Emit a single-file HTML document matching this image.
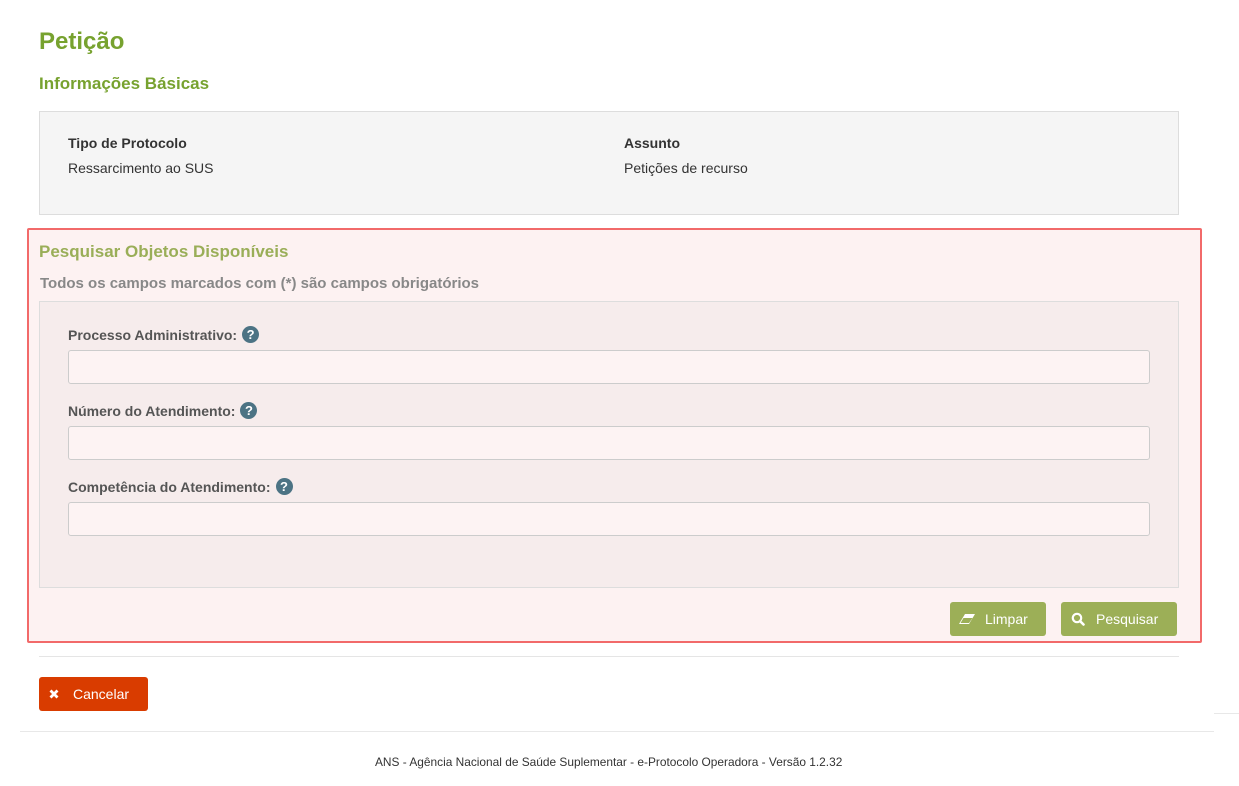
<!DOCTYPE html>
<html><head><meta charset="utf-8"><style>
*{box-sizing:border-box;margin:0;padding:0}
body{width:1239px;height:786px;background:#fff;font-family:"Liberation Sans",Arial,sans-serif;position:relative;overflow:hidden;color:#333}
.a{position:absolute}
h1{position:absolute;left:39px;top:28px;font-size:24px;color:#77a22f;font-weight:bold}
.h2{left:39px;top:74px;font-size:17px;font-weight:bold;color:#77a22f}
.info{left:39px;top:111px;width:1140px;height:104px;background:#f5f5f5;border:1px solid #ddd}
.lbl{font-size:14px;font-weight:bold;color:#333}
.val{font-size:14px;color:#333}
.box{left:27px;top:228px;width:1175px;height:415px;border:2px solid #f26a6a;background:#fdf2f2;border-radius:2px}
.inner{left:39px;top:301px;width:1140px;height:287px;background:#f6ecec;border:1px solid #ddd}
.fl{font-size:14px;font-weight:bold;color:#555}
.in{left:68px;width:1082px;height:34px;border:1px solid #ccc;background:#fdf3f3;border-radius:3px}
.q{display:inline-block;width:17px;height:17px;border-radius:50%;background:#4c7384;color:#fff;font-size:13px;font-weight:bold;text-align:center;line-height:17px;vertical-align:1px;margin-left:5px}
.btn{height:34px;border-radius:3px;color:#fff;font-size:14px;line-height:34px}
</style></head><body>
<h1>Petição</h1>
<div class="a h2">Informações Básicas</div>
<div class="a info"></div>
<div class="a lbl" style="left:68px;top:135px">Tipo de Protocolo</div>
<div class="a val" style="left:68px;top:160px">Ressarcimento ao SUS</div>
<div class="a lbl" style="left:624px;top:135px">Assunto</div>
<div class="a val" style="left:624px;top:160px">Petições de recurso</div>
<div class="a box"></div>
<div class="a" style="left:39px;top:242px;font-size:17px;font-weight:bold;color:#9aae58">Pesquisar Objetos Disponíveis</div>
<div class="a" style="left:40px;top:275px;font-size:15px;font-weight:bold;color:#888">Todos os campos marcados com (*) são campos obrigatórios</div>
<div class="a inner"></div>
<div class="a fl" style="left:68px;top:326px">Processo Administrativo:<span class="q">?</span></div>
<div class="a in" style="top:350px"></div>
<div class="a fl" style="left:68px;top:402px">Número do Atendimento:<span class="q">?</span></div>
<div class="a in" style="top:426px"></div>
<div class="a fl" style="left:68px;top:478px">Competência do Atendimento:<span class="q">?</span></div>
<div class="a in" style="top:502px"></div>
<div class="a btn" style="left:950px;top:602px;width:96px;background:#9caf57;padding-left:35px">Limpar
<svg class="a" style="left:9px;top:12px" width="16" height="10" viewBox="0 0 16 10"><path d="M6 0H16L10 10H0Z" fill="#fff"/><path d="M4.5 4H13.5L10 9H1.5Z" fill="#9caf57"/></svg></div>
<div class="a btn" style="left:1061px;top:602px;width:116px;background:#9caf57;padding-left:35px">Pesquisar
<svg class="a" style="left:10px;top:10px" width="14" height="14" viewBox="0 0 14 14"><circle cx="6" cy="6" r="4.2" fill="none" stroke="#fff" stroke-width="2.2"/><path d="M9 9L12.5 12.5" stroke="#fff" stroke-width="2.6" stroke-linecap="round"/></svg></div>
<div class="a" style="left:39px;top:656px;width:1140px;height:1px;background:#e5e5e5"></div>
<div class="a btn" style="left:39px;top:677px;width:109px;background:#d93c00;padding-left:34px">Cancelar
<svg class="a" style="left:10px;top:12px" width="10" height="10" viewBox="0 0 10 10"><path d="M1.5 1.5L8.5 8.5M8.5 1.5L1.5 8.5" stroke="#fff" stroke-width="2.8"/></svg></div>
<div class="a" style="left:1214px;top:713px;width:25px;height:1px;background:#e8e8e8"></div>
<div class="a" style="left:20px;top:731px;width:1194px;height:1px;background:#e8e8e8"></div>
<div class="a" style="left:375px;top:755px;font-size:11.9px;color:#333;white-space:nowrap">ANS - Agência Nacional de Saúde Suplementar - e-Protocolo Operadora - Versão 1.2.32</div>
</body></html>
